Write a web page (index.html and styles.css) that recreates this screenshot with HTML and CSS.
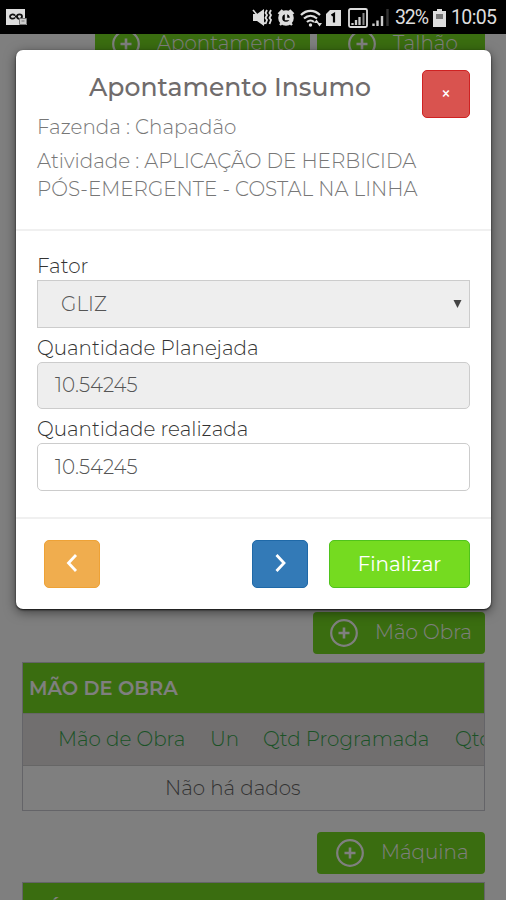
FILE: index.html
```html
<!DOCTYPE html>
<html lang="pt-BR">

<head>
    <meta charset="UTF-8">
    <meta name="viewport" content="width=device-width, initial-scale=1.0">
    <title>Apontamento Insumo</title>
    <link rel="stylesheet" href="styles.css">
</head>

<body>
    <svg class="symbols" width="0" height="0">
        <symbol id="plus" viewBox="0 0 28 28">
            <circle cx="14" cy="14" r="12.8" fill="none" stroke="currentColor" stroke-width="2.2" />
            <path d="M14 8.5v11M8.5 14h11" stroke="currentColor" stroke-width="2.6" />
        </symbol>
    </svg>

    <header class="status-bar">
        <svg class="status-app" width="22" height="18" viewBox="0 0 22 18">
            <path d="M0 0h19v10h2v6H0z" fill="#ddd" />
            <path d="M9 6.5C7 4.7 4 5.3 4 7.6s3 2.7 5 1M9 7.5h1.5M11 7.6c0-3 5-3 5 0s-5 3-5 0" fill="none" stroke="#111" stroke-width="1.8" />
            <path d="M13.5 9.5h7v6h-7z" fill="#ccc" stroke="#777" />
            <path d="M15.5 12h3" stroke="#777" />
        </svg>
        <div class="status-right">
            <svg width="242" height="24" viewBox="0 0 242 24">
                <!-- mudo -->
                <path d="M0 8h4l7-5v17l-7-5H0z" fill="#ddd" />
                <path d="M0 4l12 14" stroke="#ddd" stroke-width="1.6" />
                <path d="M14 4l-1.500 3 1.500 2-1.500 3 1.500 2-1.500 4M18 4l-1.500 3 1.500 2-1.500 3 1.500 2-1.500 4" fill="none" stroke="#ddd" stroke-width="1.8" />
                <!-- alarme -->
                <circle cx="33" cy="12" r="5.800" fill="none" stroke="#ddd" stroke-width="4" />
                <path d="M33 8v5h4M25.500 8l4-4M40.500 8l-4-4M27 19l2-2M39 19l-2-2" fill="none" stroke="#ddd" stroke-width="2.4" />
                <!-- wifi -->
                <path d="M48 9c5.500-5.500 13.500-5.500 19 0M51 12.500c4-3.500 9-3.500 13 0M54 16c2-2 5-2 7 0" fill="none" stroke="#ddd" stroke-width="2.200" />
                <circle cx="57.500" cy="19" r="1.700" fill="#ddd" />
                <path d="M61 17l2.500-3.500 2.500 3.500zM64 17h5l-2.500 3.500z" fill="#ddd" />
                <!-- chip -->
                <path d="M77 4h11v16H73V8z" fill="#ddd" />
                <path d="M78.500 9.500l2.500-1.500v8.500" fill="none" stroke="#000" stroke-width="2.200" />
                <!-- sinal -->
                <rect x="96" y="3" width="18" height="18" rx="1.500" fill="none" stroke="#ddd" stroke-width="1.800" />
                <path d="M99.500 19v-2M103 19v-5M106.500 19v-8" stroke="#ccc" stroke-width="2.300" />
                <path d="M110.500 19V7" stroke="#888" stroke-width="2" />
                <path d="M120.500 20v-2.500M124.500 20v-5.500M129 20v-10" stroke="#ccc" stroke-width="2.400" />
                <path d="M134.500 20V3" stroke="#333" stroke-width="2.400" />
                <text x="142" y="18" class="status-text" textLength="34">32%</text>
                <!-- bateria -->
                <path d="M184 3h5v2h4v16h-13V5h4z" fill="#ddd" />
                <path d="M183 8h7v5h-7z" fill="#777" />
                <text x="198" y="18" class="status-text" textLength="46">10:05</text>
            </svg>
        </div>
    </header>

    <main class="page">
        <div class="top-buttons">
            <button class="btn-add btn-apontamento"><svg><use href="#plus" /></svg><span>Apontamento</span></button>
            <button class="btn-add btn-talhao"><svg><use href="#plus" /></svg><span>Talhão</span></button>
        </div>

        <button class="btn-add btn-mao"><svg><use href="#plus" /></svg><span>Mão Obra</span></button>

        <section class="panel">
            <h2>MÃO DE OBRA</h2>
            <div class="columns">
                <span class="col-mao">Mão de Obra</span>
                <span class="col-un">Un</span>
                <span class="col-qtd">Qtd Programada</span>
                <span class="col-real">Qtd</span>
            </div>
            <p class="empty">Não há dados</p>
        </section>

        <button class="btn-add btn-maquina"><svg><use href="#plus" /></svg><span>Máquina</span></button>

        <section class="panel">
            <h2>MÁQUINA</h2>
        </section>
    </main>

    <div class="backdrop">
        <div class="modal">
            <div class="modal-header">
                <div class="title-row">
                    <h1>Apontamento Insumo</h1>
                    <button class="btn btn-close">×</button>
                </div>
                <p class="fazenda">Fazenda : Chapadão</p>
                <p class="atividade">Atividade : APLICAÇÃO DE HERBICIDA<br>PÓS-EMERGENTE - COSTAL NA LINHA</p>
            </div>
            <div class="modal-body">
                <label>Fator</label>
                <div class="field field-select"><span>GLIZ</span>
                    <svg width="9" height="8" viewBox="0 0 9 8"><path d="M.5 0h8l-4 8z" fill="#444" /></svg>
                </div>
                <label>Quantidade Planejada</label>
                <div class="field field-disabled"><span>10.54245</span></div>
                <label>Quantidade realizada</label>
                <div class="field"><span>10.54245</span></div>
            </div>
            <div class="modal-footer">
                <button class="btn btn-prev">
                    <svg width="14" height="20" viewBox="0 0 14 20"><path d="M11 1L3.500 9l7.500 8" fill="none" stroke="#fff" stroke-width="2.800" /></svg>
                </button>
                <button class="btn btn-next">
                    <svg width="14" height="20" viewBox="0 0 14 20"><path d="M3.500 1l7.500 8-7.500 8" fill="none" stroke="#fff" stroke-width="2.800" /></svg>
                </button>
                <button class="btn btn-finish">Finalizar</button>
            </div>
        </div>
    </div>
</body>

</html>
```

FILE: styles.css
```css
* {
    box-sizing: border-box;
}

body {
    margin: 0;
    height: 900px;
    overflow: hidden;
    position: relative;
    background: #fff;
    font-family: Montserrat, Inter, 'Open Sans', sans-serif;
    font-size: 19.9px;
    font-weight: 300;
    color: #333;
}

h1,
h2,
p {
    margin: 0;
}

button {
    font: inherit;
    padding: 0;
}

.symbols {
    position: absolute;
}

/* status bar */
.status-bar {
    height: 34px;
    padding: 0 8px 0 6px;
    background: #000;
    display: flex;
    justify-content: space-between;
}

.status-app {
    margin-top: 9px;
}

.status-right {
    margin-top: 6px;
    height: 24px;
}

.status-right svg {
    display: block;
    overflow: visible;
    margin-right: 3px;
}

.status-text {
    font-family: Roboto, sans-serif;
    font-size: 19.5px;
    font-weight: 400;
    fill: #ddd;
}

/* page */
.page {
    height: 866px;
    overflow: hidden;
    padding: 0 21px 0 22px;
    display: flex;
    flex-direction: column;
    align-items: flex-end;
}

.top-buttons {
    display: flex;
    gap: 7px;
    margin: -11px 0 547px;
}

.btn-add {
    height: 42px;
    flex-shrink: 0;
    display: flex;
    align-items: center;
    border: 0;
    border-radius: 4px;
    background: #75db20;
    color: #fff;
    white-space: nowrap;
}

.btn-add svg {
    width: 28px;
    height: 28px;
    margin-left: 17px;
    margin-right: 17px;
}

.btn-add span {
    margin-top: -3px;
}

.btn-apontamento {
    width: 215px;
}

.btn-talhao {
    width: 168px;
}

.btn-talhao svg {
    margin-left: 31px;
}

.btn-mao {
    width: 172px;
}

.btn-maquina {
    width: 168px;
    margin: 21px 0 8px;
}

.btn-maquina svg {
    margin-left: 19px;
}

.panel {
    width: 463px;
    flex-shrink: 0;
    border: 1px solid #c8c8d0;
    overflow: hidden;
}

.btn-mao + .panel {
    height: 149px;
    margin-top: 8px;
}

.panel h2 {
    height: 50px;
    padding-left: 6px;
    background: #75db20;
    color: #fff;
    font-size: 19.4px;
    font-weight: 600;
    line-height: 50px;
}

.columns {
    height: 53px;
    padding-left: 35px;
    border-top: 1px solid #ccc;
    border-bottom: 1px solid #ccc;
    background: #e2dfdf;
    color: #36a54c;
    line-height: 50px;
    white-space: nowrap;
    display: flex;
}

.columns span {
    flex-shrink: 0;
}

.col-mao {
    width: 152px;
}

.col-un {
    width: 53px;
}

.col-qtd {
    width: 192px;
}

.empty {
    padding-left: 142px;
    line-height: 45px;
    color: #666;
}

/* modal */
.backdrop {
    position: absolute;
    top: 34px;
    left: 0;
    right: 0;
    bottom: 0;
    padding: 16px 15px 0 16px;
    background: rgba(0, 0, 0, 0.5);
}

.modal {
    height: 559px;
    background: #fff;
    border-radius: 7px;
    box-shadow: 0 1px 2px rgba(0, 0, 0, 0.8), 0 3px 12px rgba(0, 0, 0, 0.5);
}

.modal-header {
    height: 181px;
    padding: 20px 21px 0;
    border-bottom: 2px solid #f0f0f0;
    color: #777;
}

.title-row {
    height: 43px;
    display: flex;
    justify-content: space-between;
    align-items: flex-start;
}

h1 {
    margin-left: 52px;
    font-size: 25.1px;
    font-weight: 500;
    line-height: 34px;
    color: #706c6c;
    white-space: nowrap;
}

.fazenda {
    line-height: 28px;
    margin-bottom: 6px;
}

.atividade {
    line-height: 28px;
    white-space: nowrap;
}

.modal-body {
    height: 288px;
    padding: 23px 21px 0;
    border-bottom: 2px solid #f0f0f0;
}

.modal-body label {
    display: block;
    height: 26px;
    line-height: 25px;
}

.field {
    height: 47.5px;
    margin-bottom: 8px;
    padding: 0 17px;
    border: 1.5px solid #ccc;
    border-radius: 5px;
    color: #555;
    display: flex;
    align-items: center;
}

.field-select {
    padding: 0 7px 0 23px;
    justify-content: space-between;
    border-radius: 0;
    background: #eee;
}

.field-disabled {
    background: #eee;
}

.modal-footer {
    padding: 21px 21px 0 28px;
    display: flex;
}

.btn {
    height: 48px;
    border: 1px solid;
    border-radius: 5px;
    color: #fff;
    display: flex;
    align-items: center;
    justify-content: center;
}

.btn-close {
    width: 48px;
    border-color: #cf2222;
    background: #d9534f;
    font-size: 18px;
    font-weight: 500;
}

.btn-prev {
    width: 56px;
    border-color: #eea236;
    background: #f0ad4e;
}

.btn-next {
    width: 56px;
    margin-left: auto;
    margin-right: 21px;
    border-color: #1f69a8;
    background: #337ab7;
}

.btn-finish {
    width: 141px;
    border-color: #4fc31c;
    background: #75db20;
    font-weight: 400;
}
```
